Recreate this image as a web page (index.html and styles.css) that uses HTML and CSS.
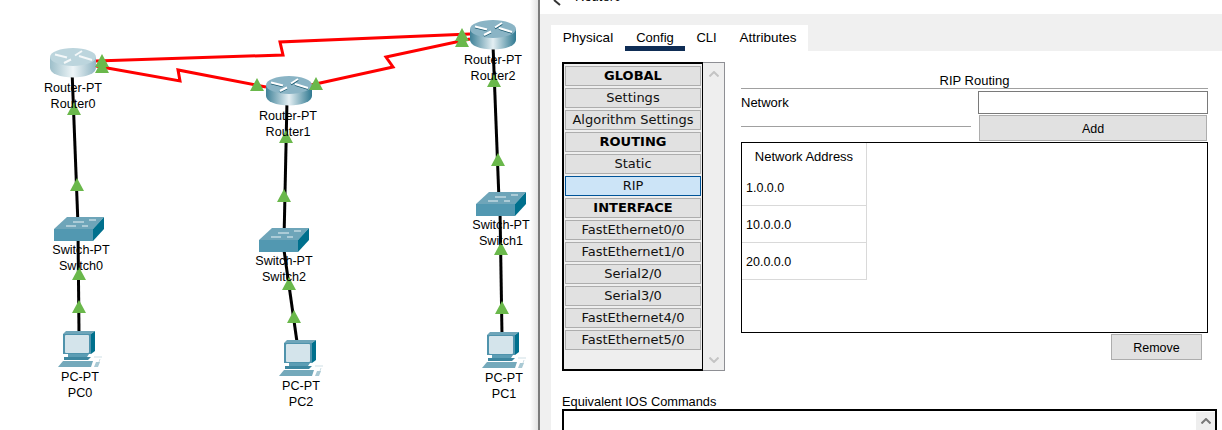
FILE: index.html
```html
<!DOCTYPE html>
<html>

<head>
   <meta name="viewport" content="width=device-width, initial-scale=1.0">
   <title>Router0</title>
   <link rel="stylesheet" href="styles.css">
</head>

<body>
   <div class="workspace">
      <svg class="topology" width="538" height="430" viewBox="0 0 538 430">
         <defs>
            <linearGradient id="body-light" x1="0" x2="1" y1="0" y2="0">
               <stop offset="0" stop-color="#9dbfca" />
               <stop offset="0.5" stop-color="#eef5f7" />
               <stop offset="1" stop-color="#8fb4c2" />
            </linearGradient>
            <linearGradient id="body-dark" x1="0" x2="1" y1="0" y2="0">
               <stop offset="0" stop-color="#3f8198" />
               <stop offset="0.5" stop-color="#e4eff3" />
               <stop offset="1" stop-color="#2f7890" />
            </linearGradient>
            <g id="router-arrows" fill="none" stroke-width="2">
               <path d="M5 6.500 17 9.500M25 7.500 32 3M14 15 21 11.500M29 8 42 12" />
            </g>
            <symbol id="router-selected" width="46" height="30" viewBox="0 0 46 30">
               <path d="M0 9V20A23 9.500 0 0 0 46 20V9Z" fill="url(#body-light)" />
               <ellipse cx="23" cy="9" rx="23" ry="9" fill="#bcd5dd" />
               <use href="#router-arrows" stroke="#f4f8f9" />
            </symbol>
            <symbol id="router" width="46" height="30" viewBox="0 0 46 30">
               <path d="M0 9V20A23 9.500 0 0 0 46 20V9Z" fill="url(#body-dark)" />
               <ellipse cx="23" cy="9" rx="23" ry="9" fill="#8ab4c5" />
               <use href="#router-arrows" stroke="#17576d" y="0.800" />
               <use href="#router-arrows" stroke="#fff" />
            </symbol>
            <symbol id="switch" width="50" height="24" viewBox="0 0 50 24">
               <path d="M0 12 13 0H50L39 12Z" fill="#6ea5b9" />
               <path d="M0 12H39V24H0Z" fill="#5298b1" />
               <path d="M39 12 50 0V12L39 24Z" fill="#00708d" />
               <path d="M19 5H30M35 3H42M12 9H22M28 9H34" stroke="#e9f2f5" fill="none" />
            </symbol>
            <symbol id="pc" width="45" height="37" viewBox="0 0 45 37">
               <path d="M5 3 8 0H37L33 3Z" fill="#6ea5b9" />
               <path d="M33 3 37 0V20L33 23Z" fill="#00708d" />
               <rect x="5" y="3" width="28" height="20" fill="#4f93ac" />
               <rect x="7" y="4" width="24" height="18" rx="1" fill="#d4e4eb" />
               <path d="M10 23H31L29 26H10Z" fill="#5c9db4" />
               <path d="M6 26H33L30 29H6Z" fill="#3d869f" />
               <path d="M0 36 5 30H35L33 36Z" fill="#74a9bb" />
               <path d="M36 36 38 31H42L40 36Z" fill="#a9c9d4" />
               <path d="M36 26H44M42 28 41 31" stroke="#cfdfe5" fill="none" />
            </symbol>
            <path id="arrow" d="M0 0 7 13H-7Z" fill="#6ab84b" />
         </defs>

         <!-- links -->
         <g class="link-serial">
            <polyline points="96,66 180,81 178,70 266,87" />
            <polyline points="96,61 283,55 280,42 470,34" />
            <polyline points="311,85 393,67 386,57 470,39" />
         </g>
         <g class="link-copper">
            <line x1="72" y1="70" x2="78" y2="225" />
            <line x1="78" y1="230" x2="79" y2="333" />
            <line x1="287" y1="100" x2="284" y2="240" />
            <line x1="284" y1="250" x2="297" y2="342" />
            <line x1="493" y1="45" x2="499" y2="200" />
            <line x1="500" y1="210" x2="502" y2="335" />
         </g>

         <!-- devices -->
         <use href="#router-selected" x="50" y="48" />
         <use href="#router" x="266" y="76" />
         <use href="#router" x="470" y="20" />
         <use href="#switch" x="54" y="217" />
         <use href="#switch" x="259" y="228" />
         <use href="#switch" x="476" y="192" />
         <use href="#pc" x="58" y="331" />
         <use href="#pc" x="279" y="340" />
         <use href="#pc" x="482" y="332" />

         <!-- link lights -->
         <use href="#arrow" x="102" y="54" />
         <use href="#arrow" x="102" y="60" />
         <use href="#arrow" x="74" y="102" />
         <use href="#arrow" x="77" y="178" />
         <use href="#arrow" x="257" y="78" />
         <use href="#arrow" x="316" y="77" />
         <use href="#arrow" x="286" y="130" />
         <use href="#arrow" x="284" y="189" />
         <use href="#arrow" x="462" y="28" />
         <use href="#arrow" x="462" y="34" />
         <use href="#arrow" x="494" y="74" />
         <use href="#arrow" x="498" y="153" />
         <use href="#arrow" x="79" y="267" />
         <use href="#arrow" x="79" y="300" />
         <use href="#arrow" x="289" y="277" />
         <use href="#arrow" x="294" y="310" />
         <use href="#arrow" x="501" y="242" />
         <use href="#arrow" x="502" y="301" />

         <!-- labels -->
         <g class="node-label">
            <text x="73" y="92">Router-PT</text>
            <text x="73" y="108">Router0</text>
            <text x="288" y="120">Router-PT</text>
            <text x="288" y="136">Router1</text>
            <text x="493" y="64">Router-PT</text>
            <text x="493" y="80">Router2</text>
            <text x="81" y="254">Switch-PT</text>
            <text x="81" y="270">Switch0</text>
            <text x="284" y="265">Switch-PT</text>
            <text x="284" y="281">Switch2</text>
            <text x="501" y="229">Switch-PT</text>
            <text x="501" y="245">Switch1</text>
            <text x="80" y="381">PC-PT</text>
            <text x="80" y="397">PC0</text>
            <text x="301" y="390">PC-PT</text>
            <text x="301" y="406">PC2</text>
            <text x="504" y="382">PC-PT</text>
            <text x="504" y="398">PC1</text>
         </g>
      </svg>
   </div>

   <div class="window">
      <div class="title-bar">
         <svg class="title-icon" width="12" height="6" viewBox="0 0 12 6">
            <path d="M1 0 7 5" stroke="#333" stroke-width="2" fill="none" />
         </svg>
         <span class="title-text">Router0</span>
      </div>

      <div class="window-body">
         <div class="tabs">
            <span class="tab tab-physical">Physical</span>
            <span class="tab tab-config">Config</span>
            <span class="tab tab-cli">CLI</span>
            <span class="tab tab-attributes">Attributes</span>
         </div>

         <div class="panel">
            <div class="config-row">
               <div class="side-list">
                  <div class="side-items">
                     <div class="side-item side-head">GLOBAL</div>
                     <div class="side-item">Settings</div>
                     <div class="side-item">Algorithm Settings</div>
                     <div class="side-item side-head">ROUTING</div>
                     <div class="side-item">Static</div>
                     <div class="side-item side-active">RIP</div>
                     <div class="side-item side-head">INTERFACE</div>
                     <div class="side-item">FastEthernet0/0</div>
                     <div class="side-item">FastEthernet1/0</div>
                     <div class="side-item">Serial2/0</div>
                     <div class="side-item">Serial3/0</div>
                     <div class="side-item">FastEthernet4/0</div>
                     <div class="side-item">FastEthernet5/0</div>
                  </div>
                  <div class="side-scroll">
                     <svg width="10" height="6" viewBox="0 0 10 6">
                        <path d="M0.500 5.500 5 1 9.500 5.500" />
                     </svg>
                     <svg width="10" height="6" viewBox="0 0 10 6">
                        <path d="M0.500 0.500 5 5 9.500 0.500" />
                     </svg>
                  </div>
               </div>

               <div class="rip-form">
                  <div class="rip-title">RIP Routing</div>
                  <div class="network-row">
                     <div class="network-label">Network</div>
                     <div class="network-fields">
                        <input class="network-input" type="text">
                        <button class="btn btn-add">Add</button>
                     </div>
                  </div>
                  <div class="address-box">
                     <div class="address-col">
                        <div class="address-head">Network Address</div>
                        <div class="address-row">1.0.0.0</div>
                        <div class="address-row">10.0.0.0</div>
                        <div class="address-row">20.0.0.0</div>
                     </div>
                  </div>
                  <div class="remove-row">
                     <button class="btn btn-remove">Remove</button>
                  </div>
               </div>
            </div>

            <div class="ios-label">Equivalent IOS Commands</div>
            <div class="ios-box">
               <div class="ios-scroll">
                  <svg width="10" height="6" viewBox="0 0 10 6">
                     <path d="M0.500 5.500 5 1 9.500 5.500" />
                  </svg>
               </div>
            </div>
         </div>
      </div>
   </div>
</body>

</html>
```

FILE: styles.css
```css
* {
   box-sizing: border-box;
}

html,
body {
   margin: 0;
   height: 430px;
   overflow: hidden;
}

body {
   display: flex;
   width: 1222px;
   background: #fff;
   color: #000;
   font-family: "Liberation Sans", Arial, sans-serif;
   font-size: 13px;
}

/* Topology canvas */
.workspace {
   flex: 0 0 538px;
   height: 430px;
   background: linear-gradient(to right, #fff 530px, #e4e4e4 538px);
}

.topology {
   display: block;
}

.link-serial polyline {
   fill: none;
   stroke: #f00;
   stroke-width: 3;
}

.link-copper line {
   stroke: #000;
   stroke-width: 3;
}

.node-label text {
   text-anchor: middle;
   font-size: 12.6px;
   fill: #000;
}

/* Window */
.window {
   flex: 1;
   display: flex;
   flex-direction: column;
   height: 430px;
   border-left: 2px solid #7c7c7c;
}

.title-bar {
   display: flex;
   flex: 0 0 14px;
   padding-left: 13px;
   overflow: hidden;
   background: #fff;
}

.title-icon {
   flex: none;
}

.title-text {
   margin: -11px 0 0 10px;
   line-height: 16px;
}

.window-body {
   flex: 1;
   padding: 11px 0 0 11px;
   background: #f0f0f0;
   overflow: hidden;
}

.tabs {
   display: flex;
   width: 257px;
   height: 26px;
   background: #fff;
}

.tab {
   line-height: 26px;
   text-align: center;
}

.tab-physical {
   width: 74px;
   font-size: 13.500px;
}

.tab-config {
   width: 60px;
   border-bottom: 5px solid #0f2d55;
}

.tab-cli {
   width: 43px;
}

.tab-attributes {
   width: 80px;
   font-size: 13.500px;
}

.panel {
   height: 379px;
   padding: 11px 0 0 11px;
   background: #fff;
}

.config-row {
   display: flex;
   height: 309px;
}

/* Side list */
.side-list {
   display: flex;
   flex: 0 0 163px;
   border: 1px solid #8e8f94;
   background: #eee;
}

.side-items {
   flex: 0 0 141px;
   display: flex;
   flex-direction: column;
   gap: 2px;
   margin: -1px 0 -1px -1px;
   padding: 2px 1px 0 1px;
   border: 1px solid #000;
   border-width: 2px 1px 2px 2px;
}

.side-item {
   height: 20px;
   border: 1px solid #adadad;
   background: #e1e1e1;
   color: #111;
   font-family: "DejaVu Sans", Verdana, sans-serif;
   font-size: 13px;
   line-height: 18px;
   text-align: center;
}

.side-head {
   font-weight: bold;
   color: #000;
}

.side-active {
   border-color: #005499;
   background: #cce4f7;
}

.side-scroll {
   flex: 1;
   display: flex;
   flex-direction: column;
   align-items: center;
   justify-content: space-between;
   padding: 8px 0 7px;
}

.side-scroll svg,
.ios-scroll svg {
   display: block;
}

.side-scroll path,
.ios-scroll path {
   fill: none;
   stroke: #c4c4c4;
   stroke-width: 2;
}

.ios-scroll path {
   stroke: #777;
}

/* RIP form */
.rip-form {
   flex: 1;
   margin: 0 14px 0 16px;
}

.rip-title {
   height: 27px;
   padding-top: 12px;
   border-bottom: 1px solid #a0a0a0;
   line-height: 14px;
   text-align: center;
}

.network-row {
   display: grid;
   grid-template-columns: 230px 230px;
   gap: 7px;
   height: 53px;
}

.network-label {
   height: 38px;
   padding-top: 6px;
   border-bottom: 1px solid #a0a0a0;
   line-height: 15px;
}

.network-fields {
   display: flex;
   flex-direction: column;
   padding-top: 2px;
}

.network-input {
   display: block;
   width: 230px;
   height: 23px;
   margin: 0;
   border: 1px solid #7a7a7a;
   border-radius: 0;
   outline: none;
   background: #fff;
}

.btn {
   display: block;
   margin: 0;
   padding: 2px 0 0;
   border: 1px solid #adadad;
   border-radius: 0;
   background: #e1e1e1;
   color: #000;
   font-family: inherit;
   font-size: 12.500px;
}

.btn-add {
   width: 228px;
   height: 26px;
   margin: 1px 0 0 1px;
}

.address-box {
   height: 191px;
   border: 1px solid #000;
}

.address-col {
   width: 125px;
   border-right: 1px solid #d9d9d9;
}

.address-head {
   height: 26px;
   padding-top: 1px;
   line-height: 26px;
   text-align: center;
}

.address-row {
   height: 37px;
   padding: 11px 0 0 4px;
   border-bottom: 1px solid #d9d9d9;
   font-size: 12.500px;
   line-height: 16px;
}

.remove-row {
   display: flex;
   justify-content: flex-end;
   padding: 1px 6px 0 0;
}

.btn-remove {
   width: 91px;
   height: 26px;
}

/* IOS commands */
.ios-label {
   height: 14px;
   margin-top: 24px;
   font-size: 12.800px;
   line-height: 13px;
   white-space: nowrap;
}

.ios-box {
   display: flex;
   justify-content: flex-end;
   width: 655px;
   height: 40px;
   padding-top: 1px;
   border: 2px solid #000;
}

.ios-scroll {
   display: flex;
   justify-content: center;
   width: 19px;
   padding-top: 6px;
   background: #eee;
}
```
